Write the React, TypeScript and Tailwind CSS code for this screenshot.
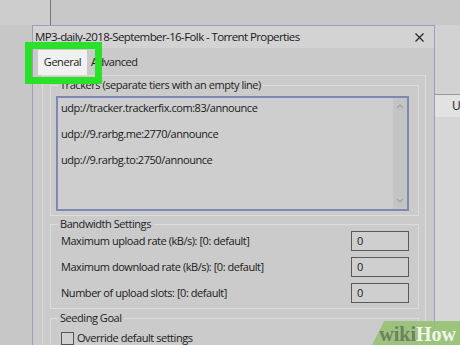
import React from 'react';

const font = "font-['Open_Sans','Noto_Sans',sans-serif]";
const body = 'text-[11px] tracking-[-0.45px]';

const trackers = [
    'udp://tracker.trackerfix.com:83/announce',
    '',
    'udp://9.rarbg.me:2770/announce',
    '',
    'udp://9.rarbg.to:2750/announce',
];

const bandwidthRows = [
    'Maximum upload rate (kB/s): [0: default]',
    'Maximum download rate (kB/s): [0: default]',
    'Number of upload slots: [0: default]',
];

const GroupBox: React.FC<{ label: string; className?: string; children: React.ReactNode }> = ({ label, className, children }) => (
    <fieldset className={`border border-[#dcdcdc] ${className ?? ''}`}>
        <legend className={`ml-[7px] px-[2px] leading-[14px] text-[#1e1e1e] ${body}`}>{label}</legend>
        {children}
    </fieldset>
);

export default function App() {
    return (
        <div className={`relative w-[460px] h-[345px] overflow-hidden bg-[#c9c9c9] text-[#1a1a1a] ${font}`}>
            {/* desktop behind the dialog */}
            <div className="h-[25px] flex">
                <div className="w-[50px] bg-[#cdcdcd]" />
                <div className="flex-1 border-l border-[#77777d] bg-[#c8c8c8]" />
            </div>

            <div className="flex">
                <div className="w-[32px] shrink-0 bg-[#c7c7c7]" />

                {/* dialog */}
                <div className="w-[403px] shrink-0 h-[330px] border border-[#9c9dbd] bg-[#cacaca]">
                    <div className="h-[22px] flex items-center justify-between pl-[2px] pr-[10px] bg-[#d3d3d3]">
                        <span className="text-[11.5px] tracking-[-0.6px] leading-none">MP3-daily-2018-September-16-Folk - Torrent Properties</span>
                        <svg width="9" height="9" viewBox="0 0 9 9" className="text-[#222]">
                            <path d="M0.5 0.5 L8.5 8.5 M8.5 0.5 L0.5 8.5" stroke="currentColor" strokeWidth="1.1" />
                        </svg>
                    </div>

                    <div className="h-[27px] flex items-end pl-[5px]">
                        <div className={`h-[25px] w-[49px] bg-[#f1f1f1] flex items-center justify-center ${body}`}>General</div>
                        <div className={`h-[25px] pl-[4px] flex items-center ${body}`}>Advanced</div>
                    </div>

                    <div className="ml-[9px] mr-[8px] border border-[#dadada] bg-[#cbcbcb] pt-[2px] pl-[7px] pr-[6px] h-[300px]">
                        <GroupBox label="Trackers (separate tiers with an empty line)" className="pb-[4px]">
                            <div className="mt-[4px] ml-[5px] mr-[9px] h-[115px] border-2 border-[#7f87b4] bg-[#cecece] flex">
                                <div className={`flex-1 pt-[3px] pl-[3px] leading-[13px] whitespace-pre ${body}`}>
                                    {trackers.map((t, i) => (
                                        <div key={i} className="h-[13px]">{t}</div>
                                    ))}
                                </div>
                                <div className="w-[14px] bg-[#c4c4c4] flex flex-col items-center justify-between py-[6px] text-[#a0a0a0]">
                                    <svg width="8" height="5" viewBox="0 0 8 5"><path d="M1 4 L4 1 L7 4" fill="none" stroke="currentColor" strokeWidth="1.2" /></svg>
                                    <svg width="8" height="5" viewBox="0 0 8 5"><path d="M1 1 L4 4 L7 1" fill="none" stroke="currentColor" strokeWidth="1.2" /></svg>
                                </div>
                            </div>
                        </GroupBox>

                        <GroupBox label="Bandwidth Settings" className="mt-[1px] pb-[5px]">
                            <div className="flex flex-col gap-[6px]">
                                {bandwidthRows.map(r => (
                                    <div key={r} className="h-[20px] flex items-center justify-between pl-[10px] pr-[9px]">
                                        <span className={body}>{r}</span>
                                        <div className={`w-[58px] h-[20px] border border-[#5a5a5a] bg-[#cfcfcf] leading-[18px] pl-[5px] ${body}`}>0</div>
                                    </div>
                                ))}
                            </div>
                        </GroupBox>

                        <GroupBox label="Seeding Goal" className="mt-[2px] h-[60px]">
                            <div className={`mt-[5px] pl-[10px] flex items-center gap-[3px] ${body}`}>
                                <div className="w-[13px] h-[13px] border border-[#555] bg-[#d0d0d0]" />
                                <span>Override default settings</span>
                            </div>
                        </GroupBox>
                    </div>
                </div>

                {/* window behind, right edge */}
                <div className="flex-1 flex flex-col">
                    <div className="h-[70px] bg-[#d2d2d2] border-b border-[#9a9a9a]" />
                    <div className="h-[22px] bg-[#e2e2e2] pl-[17px] flex items-center text-[12px]">U</div>
                    <div className="flex-1 bg-[#d6d6d6]" />
                </div>
            </div>

            {/* annotation highlight around the General tab */}
            <div className="absolute left-[25px] top-[42px] w-[77px] h-[42px] border-[7px] border-[#2ae12a]" />

            {/* wikiHow watermark */}
            <div className="absolute right-0 bottom-0 w-[88px] h-[24px] bg-[#96c272]/90 [clip-path:polygon(14%_0,100%_0,100%_100%,0_100%)] flex items-center justify-end pr-[4px] pt-[2px]">
                <span className="font-['Liberation_Serif',serif] font-bold text-[20px] leading-none">
                    <span className="text-[#6f7f61]">wiki</span>
                    <span className="text-[#f2f4ee]">How</span>
                </span>
            </div>
        </div>
    );
}
